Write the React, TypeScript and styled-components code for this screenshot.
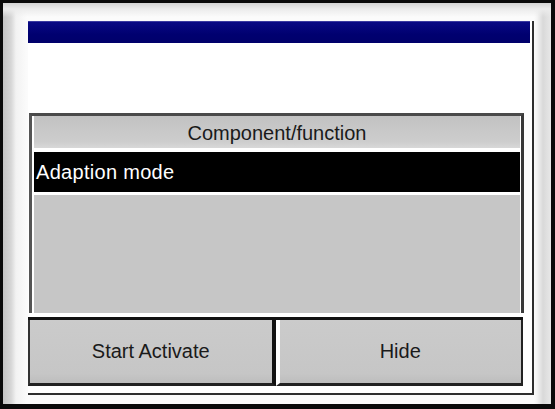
import React from "react";
import styled, { createGlobalStyle } from "styled-components";

const Global = createGlobalStyle`
  html, body { margin: 0; padding: 0; background: #ffffff; }
  * { box-sizing: border-box; }
`;

const Screen = styled.div`
  width: 555px;
  height: 409px;
  border: 3px solid #0a0a0a;
  border-width: 3px 4px 5px 3px;
  background:
    linear-gradient(to bottom, #d4d4d4 0px, #ececec 6px, rgba(255,255,255,0) 14px),
    linear-gradient(to right, #c4c4c4 0px, #d6d6d6 8px, #f2f2f2 13px, #fbfbfb 24px, #fbfbfb 531px, #f4f4f4 534px, #d9d9d9 540px, #e6e6e6 547px);
  padding: 18px 17px 9px 25px;
  display: flex;
  font-family: "Liberation Sans", Arial, sans-serif;
`;

const Window = styled.div`
  flex: 1;
  display: flex;
  flex-direction: column;
  background: #ffffff;
  border-right: 2px solid #2e2e2e;
  border-bottom: 2px solid #2e2e2e;
`;

const TitleBar = styled.div`
  height: 22px;
  margin-right: 2px;
  background: linear-gradient(to bottom, #0a0a86, #000070 60%, #00006a);
  box-shadow: inset 0 1px 0 #3a3aa0;
`;

const Blank = styled.div`
  height: 70px;
`;

const ListBox = styled.div`
  height: 200px;
  margin: 0 8px 0 1px;
  display: flex;
  flex-direction: column;
  border-top: 3px solid #4a4a4a;
  border-left: 3px solid #555555;
  border-right: 3px solid #3a3a3a;
  background: #ffffff;
  padding: 0 1px 0 2px;
`;

const Header = styled.div`
  height: 32px;
  padding-top: 3px;
  display: flex;
  align-items: center;
  justify-content: center;
  background: linear-gradient(to bottom, #c2c2c2, #cdcdcd 80%, #d8d8d8);
  color: #1a1a1a;
  font-size: 20px;
`;

const Row = styled.div<{ $selected?: boolean }>`
  height: 40px;
  margin-top: 4px;
  display: flex;
  align-items: center;
  padding-left: 2px;
  background: ${(p) => (p.$selected ? "#000000" : "#c8c8c8")};
  color: ${(p) => (p.$selected ? "#ffffff" : "#1a1a1a")};
  font-size: 20px;
  letter-spacing: 0.3px;
`;

const ListBody = styled.div`
  flex: 1;
  margin-top: 3px;
  background: #c6c6c6;
`;

const ButtonRow = styled.div`
  margin-top: 4px;
  margin-right: 9px;
  height: 69px;
  display: flex;
  border-top: 3px solid #111111;
`;

const Button = styled.div<{ $side: "left" | "right" }>`
  flex: 1;
  display: flex;
  align-items: center;
  justify-content: center;
  background: linear-gradient(to bottom, #cbcbcb, #c6c6c6 85%, #bdbdbd);
  color: #1a1a1a;
  font-size: 20px;
  border-bottom: 3px solid #222222;
  border-left: ${(p) => (p.$side === "left" ? "2px solid #333333" : "4px solid #ffffff")};
  border-right: ${(p) => (p.$side === "left" ? "4px solid #111111" : "2px solid #222222")};
`;

export default function App() {
  return (
    <>
      <Global />
      <Screen>
        <Window>
          <TitleBar />
          <Blank />
          <ListBox>
            <Header>Component/function</Header>
            <Row $selected>Adaption mode</Row>
            <ListBody />
          </ListBox>
          <ButtonRow>
            <Button $side="left">Start Activate</Button>
            <Button $side="right">Hide</Button>
          </ButtonRow>
        </Window>
      </Screen>
    </>
  );
}
